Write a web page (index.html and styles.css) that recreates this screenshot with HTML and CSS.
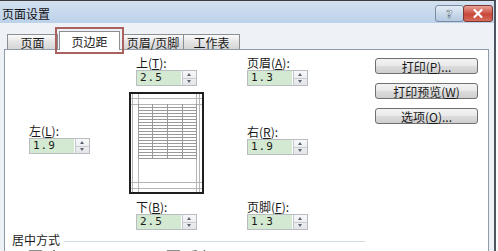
FILE: index.html
```html
<!DOCTYPE html>
<html lang="zh">
<head>
  <meta charset="UTF-8">
  <title>页面设置</title>
  <link rel="stylesheet" href="styles.css">
</head>
<body>
  <div class="dialog">
    <div class="titlebar">
      <span class="title">页面设置</span>
      <svg class="caption" width="58" height="17" viewBox="0 0 58 17">
        <defs>
          <linearGradient id="gHelp" x1="0" y1="0" x2="0" y2="1">
            <stop offset="0" stop-color="#e4edf7"/>
            <stop offset="1" stop-color="#b2c7df"/>
          </linearGradient>
          <linearGradient id="gClose" x1="0" y1="0" x2="0" y2="1">
            <stop offset="0" stop-color="#eba89e"/>
            <stop offset="0.55" stop-color="#c8473a"/>
            <stop offset="1" stop-color="#d6705f"/>
          </linearGradient>
        </defs>
        <rect x="0.5" y="0.5" width="28" height="16" rx="2.5" fill="url(#gHelp)" stroke="#7c8da3"/>
        <rect x="28.5" y="0.5" width="29" height="16" rx="2.5" fill="url(#gClose)" stroke="#7a3a33"/>
        <text x="14.5" y="13" text-anchor="middle" font-family="DejaVu Sans" font-weight="bold" font-size="11" fill="#f6f8fb" stroke="#6a7a8e" stroke-width="0.6">?</text>
        <path d="M39.5 5 L46.5 12 M46.5 5 L39.5 12" stroke="#fff" stroke-width="2.2" stroke-linecap="round"/>
      </svg>
    </div>

    <div class="tabs">
      <div class="tab t1">页面</div>
      <div class="tab active">页边距</div>
      <div class="tab t3">页眉/页脚</div>
      <div class="tab t4">工作表</div>
    </div>

    <div class="panel">
      <div class="margins">
        <div class="field top">
          <div class="lbl">上(<u>T</u>):</div>
          <div class="spin-input"><span class="val">2.5</span><span class="spin"></span></div>
        </div>
        <div class="field header">
          <div class="lbl">页眉(<u>A</u>):</div>
          <div class="spin-input"><span class="val">1.3</span><span class="spin"></span></div>
        </div>
        <div class="actions">
          <button class="btn">打印(<u>P</u>)...</button>
          <button class="btn">打印预览(<u>W</u>)</button>
          <button class="btn">选项(<u>O</u>)...</button>
        </div>

        <div class="field left">
          <div class="lbl">左(<u>L</u>):</div>
          <div class="spin-input"><span class="val">1.9</span><span class="spin"></span></div>
        </div>
        <div class="preview">
          <svg width="75" height="102" viewBox="0 0 75 102">
            <rect x="1" y="1" width="73" height="100" fill="#fff" stroke="#1e1e1e" stroke-width="2"/>
            <g stroke="#b4b4b4" stroke-width="1">
              <line x1="3.5" y1="2" x2="3.5" y2="100"/>
              <line x1="70.5" y1="2" x2="70.5" y2="100"/>
              <line x1="9.5" y1="2" x2="9.5" y2="100"/>
              <line x1="67.5" y1="2" x2="67.5" y2="100"/>
              <line x1="2" y1="6.5" x2="73" y2="6.5"/>
              <line x1="2" y1="12.5" x2="73" y2="12.5"/>
              <line x1="2" y1="90.5" x2="73" y2="90.5"/>
              <line x1="2" y1="96.5" x2="73" y2="96.5"/>
            </g>
            <g stroke="#9a9a9a" stroke-width="1">
              <line x1="9.5" y1="12" x2="9.5" y2="66"/>
              <line x1="23.5" y1="12" x2="23.5" y2="66"/>
              <line x1="38.5" y1="12" x2="38.5" y2="66"/>
              <line x1="53.5" y1="12" x2="53.5" y2="66"/>
              <line x1="67.5" y1="12" x2="67.5" y2="66"/>
              <line x1="9" y1="15.5" x2="68" y2="15.5"/>
              <line x1="9" y1="18.5" x2="68" y2="18.5"/>
              <line x1="9" y1="21.5" x2="68" y2="21.5"/>
              <line x1="9" y1="24.5" x2="68" y2="24.5"/>
              <line x1="9" y1="27.5" x2="68" y2="27.5"/>
              <line x1="9" y1="30.5" x2="68" y2="30.5"/>
              <line x1="9" y1="33.5" x2="68" y2="33.5"/>
              <line x1="9" y1="36.5" x2="68" y2="36.5"/>
              <line x1="9" y1="39.5" x2="68" y2="39.5"/>
              <line x1="9" y1="42.5" x2="68" y2="42.5"/>
              <line x1="9" y1="45.5" x2="68" y2="45.5"/>
              <line x1="9" y1="48.5" x2="68" y2="48.5"/>
              <line x1="9" y1="51.5" x2="68" y2="51.5"/>
              <line x1="9" y1="54.5" x2="68" y2="54.5"/>
              <line x1="9" y1="57.5" x2="68" y2="57.5"/>
              <line x1="9" y1="60.5" x2="68" y2="60.5"/>
              <line x1="9" y1="63.5" x2="68" y2="63.5"/>
              <line x1="9" y1="66.5" x2="68" y2="66.5"/>
            </g>
          </svg>
        </div>
        <div class="field right">
          <div class="lbl">右(<u>R</u>):</div>
          <div class="spin-input"><span class="val">1.9</span><span class="spin"></span></div>
        </div>

        <div class="field bottom">
          <div class="lbl">下(<u>B</u>):</div>
          <div class="spin-input"><span class="val">2.5</span><span class="spin"></span></div>
        </div>
        <div class="field footer">
          <div class="lbl">页脚(<u>F</u>):</div>
          <div class="spin-input"><span class="val">1.3</span><span class="spin"></span></div>
        </div>
      </div>

      <div class="group-head">居中方式</div>
      <div class="checks">
        <label class="chk"><span class="box"></span>水平(<u>Z</u>)</label>
        <label class="chk"><span class="box"></span>垂直(<u>V</u>)</label>
      </div>
    </div>
  </div>
</body>
</html>
```

FILE: styles.css
```css
html, body {
  margin: 0;
  background-color: #fff;
  overflow: hidden;
}

body {
  font-family: "Noto Sans CJK SC", "Noto Sans", sans-serif;
  font-size: 12px;
  color: #1a1a1a;
  width: 498px;
  height: 251px;
}

.dialog {
  width: 496px;
  height: 300px;
  box-sizing: border-box;
  background-color: #eef1f5;
  border-top: 1px solid #3c3c3c;
  border-right: 2px solid #4d5560;
  padding: 0 5px 0 4px;
}

.titlebar {
  height: 22px;
  margin: 0 -5px 0 -4px;
  padding-right: 1px;
  background: linear-gradient(#d3e1f0, #bcd2ea);
  display: flex;
  align-items: flex-start;
}

.title {
  flex: 1;
  padding-left: 2px;
  padding-top: 6px;
  line-height: 14px;
  color: #111;
}

.caption {
  flex: none;
  margin-top: 4px;
}

.tabs {
  display: flex;
  align-items: flex-end;
  height: 22px;
  margin-top: 4px;
  padding-left: 3px;
}

.tab {
  height: 15px;
  box-sizing: border-box;
  border: 1px solid #8b8e93;
  border-bottom: none;
  background: linear-gradient(#fbfbfb, #e4e4e4 50%, #d6d6d6);
  display: flex;
  align-items: center;
  justify-content: center;
  line-height: 13px;
  margin-right: -1px;
}

.t1 { width: 51px; }
.t3 { width: 62px; margin-left: 3px; }
.t4 { width: 57px; }

.tab.active {
  position: relative;
  z-index: 1;
  width: 61px;
  height: 19px;
  margin-left: 2px;
  margin-bottom: -1px;
  background: #fff;
  outline: 2px solid #a9625d;
  outline-offset: 2px;
  align-items: flex-start;
  padding-top: 3px;
}

.panel {
  background-color: #fff;
  border: 1px solid #8e9aa7;
  height: 260px;
  box-sizing: border-box;
}

.margins {
  display: grid;
  grid-template-columns: 100px 75px 43px 128px 103px;
  grid-template-rows: 30px 102px 30px;
  row-gap: 6px;
  margin: 6px 0 0 24px;
}

.field {
  display: flex;
  flex-direction: column;
}

.lbl {
  height: 13px;
  line-height: 13px;
  margin-bottom: 1px;
  white-space: nowrap;
}

.spin-input {
  display: flex;
  width: 61px;
  height: 16px;
  box-sizing: border-box;
  border: 1px solid #b9bcc1;
  background-color: #fff;
}

.val {
  flex: 1;
  background-color: #d4e9d2;
  font-family: "DejaVu Sans Mono", monospace;
  font-size: 11px;
  line-height: 14px;
  padding-left: 3px;
  letter-spacing: 1px;
}

.spin {
  width: 13px;
  margin-left: 1px;
  background:
    linear-gradient(#c8ccd2, #c8ccd2) center / 100% 1px no-repeat,
    linear-gradient(#f7f8f9, #e3e5e8);
  border-left: 1px solid #c4c7cc;
  position: relative;
}

.spin::before,
.spin::after {
  content: "";
  position: absolute;
  left: 4px;
  border-left: 2.5px solid transparent;
  border-right: 2.5px solid transparent;
}

.spin::before {
  top: 2px;
  border-bottom: 3px solid #5b6470;
}

.spin::after {
  bottom: 2px;
  border-top: 3px solid #5b6470;
}

.top { grid-column: 2; grid-row: 1; justify-self: center; }
.header { grid-column: 4; grid-row: 1; }
.left { grid-column: 1; grid-row: 2; align-self: center; margin-bottom: 8px; }
.preview { grid-column: 2; grid-row: 2; line-height: 0; }
.right { grid-column: 4; grid-row: 2; align-self: center; margin-bottom: 6px; }
.bottom { grid-column: 2; grid-row: 3; justify-self: center; }
.footer { grid-column: 4; grid-row: 3; }

.actions {
  grid-column: 5;
  grid-row: 1 / 3;
  display: flex;
  flex-direction: column;
  gap: 9px;
  padding-top: 2px;
}

.btn {
  width: 103px;
  height: 16px;
  padding: 0;
  border: 1px solid #707070;
  border-radius: 3px;
  background: linear-gradient(#f3f3f3, #e9e9e9 50%, #dcdcdc 50%, #cfcfcf);
  font-family: inherit;
  font-size: 12px;
  line-height: 13px;
  color: #1a1a1a;
}

.group-head {
  display: flex;
  align-items: center;
  width: 353px;
  margin: 3px 0 0 7px;
  line-height: 14px;
  white-space: nowrap;
}

.group-head::after {
  content: "";
  flex: 1;
  height: 1px;
  margin: 2px 0 0 4px;
  background-color: #d3dbe2;
}

.checks {
  display: flex;
  gap: 68px;
  margin: 2px 0 0 24px;
  line-height: 14px;
}

.chk {
  display: flex;
  align-items: center;
  gap: 6px;
}

.box {
  width: 11px;
  height: 11px;
  border: 1px solid #8f8f8f;
  background: linear-gradient(#e9e9e9, #fff);
}
```
